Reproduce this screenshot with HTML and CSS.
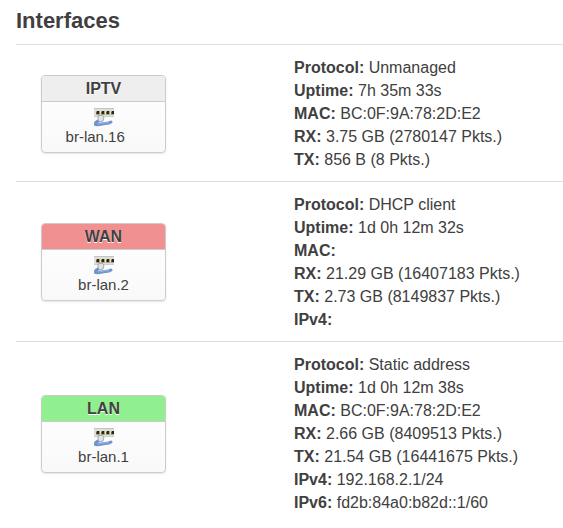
FILE: index.html
```html
<!DOCTYPE html>
<html lang="en">
<head>
    <meta charset="UTF-8">
    <meta name="viewport" content="width=device-width, initial-scale=1.0">
    <title>Interfaces</title>
    <link rel="stylesheet" href="styles.css">
</head>
<body>
    <!-- ethernet switch icon, shared by all the boxes -->
    <svg class="sprite" aria-hidden="true">
        <symbol id="icon-switch" viewBox="0 0 20 20">
            <path d="M0 1h20v9H0z" fill="#dededb"/>
            <path d="M0 1h20v1H0z" fill="#c4c4c2"/>
            <path d="M0 9h20v1H0z" fill="#cfcfcc"/>
            <path d="M2 4h4v4H2zM7 4h4v4H7zM12 4h4v4h-4zM17 4h3v4h-3z" fill="#a8a478"/>
            <path d="M3 4h2v3H3zM8 4h2v3H8zM13 4h2v3h-2zM18 4h2v3h-2z" fill="#2a2716"/>
            <path d="M2 5h1v2H2zM7 5h1v2H7zM12 5h1v2h-1zM17 5h1v2h-1z" fill="#6b6742"/>
            <path d="M5 14c-2 0-4 2-4 3s4 1 7 0 6 0 9-2" fill="none" stroke="#7095cc" stroke-width="3" stroke-linecap="round"/>
            <path d="M4 17c4 0 6-2 11-1" fill="none" stroke="#94b2dd" stroke-width="1"/>
            <path d="M4 9l4-1 2 2-1 4-3 1-2-2z" fill="#dfe2e6" stroke="#a2a8b0" stroke-width="1"/>
        </symbol>
    </svg>

    <main class="interfaces">
        <h2>Interfaces</h2>

        <section class="row">
            <div class="ifacebox">
                <div class="ifacebox-head">IPTV</div>
                <div class="ifacebox-body">
                    <svg class="icon"><use href="#icon-switch"/></svg>
                    <span>br-lan.16&nbsp;&nbsp;&nbsp;&nbsp;</span>
                </div>
            </div>
            <div class="info">
                <div><strong>Protocol:</strong> Unmanaged</div>
                <div><strong>Uptime:</strong> 7h 35m 33s</div>
                <div><strong>MAC:</strong> BC:0F:9A:78:2D:E2</div>
                <div><strong>RX:</strong> 3.75 GB (2780147 Pkts.)</div>
                <div><strong>TX:</strong> 856 B (8 Pkts.)</div>
            </div>
        </section>

        <section class="row">
            <div class="ifacebox">
                <div class="ifacebox-head wan">WAN</div>
                <div class="ifacebox-body">
                    <svg class="icon"><use href="#icon-switch"/></svg>
                    <span>br-lan.2</span>
                </div>
            </div>
            <div class="info">
                <div><strong>Protocol:</strong> DHCP client</div>
                <div><strong>Uptime:</strong> 1d 0h 12m 32s</div>
                <div><strong>MAC:</strong></div>
                <div><strong>RX:</strong> 21.29 GB (16407183 Pkts.)</div>
                <div><strong>TX:</strong> 2.73 GB (8149837 Pkts.)</div>
                <div><strong>IPv4:</strong></div>
            </div>
        </section>

        <section class="row">
            <div class="ifacebox">
                <div class="ifacebox-head lan">LAN</div>
                <div class="ifacebox-body">
                    <svg class="icon"><use href="#icon-switch"/></svg>
                    <span>br-lan.1</span>
                </div>
            </div>
            <div class="info">
                <div><strong>Protocol:</strong> Static address</div>
                <div><strong>Uptime:</strong> 1d 0h 12m 38s</div>
                <div><strong>MAC:</strong> BC:0F:9A:78:2D:E2</div>
                <div><strong>RX:</strong> 2.66 GB (8409513 Pkts.)</div>
                <div><strong>TX:</strong> 21.54 GB (16441675 Pkts.)</div>
                <div><strong>IPv4:</strong> 192.168.2.1/24</div>
                <div><strong>IPv6:</strong> fd2b:84a0:b82d::1/60</div>
            </div>
        </section>
    </main>
</body>
</html>
```
FILE: styles.css
```css
body {
    margin: 0;
    background-color: #fff;
    color: #404040;
    font-family: "Liberation Sans", Arial, sans-serif;
    font-size: 16px;
    line-height: 23px;
}

.sprite {
    display: none;
}

.interfaces {
    padding-left: 16px;
}

h2 {
    margin: 0;
    padding: 4px 0 6px;
    font-size: 22px;
    line-height: 34px;
}

/* One interface per row: box on the left, status on the right */
.row {
    display: grid;
    grid-template-columns: 253px 1fr;
    align-items: center;
    padding: 11px 0 10px 25px;
    border-top: 1px solid #ddd;
}

.ifacebox {
    width: 125px;
    box-sizing: border-box;
    border: 1px solid #ccc;
    border-radius: 4px;
    overflow: hidden;
    background: linear-gradient(#fff, #f9f9f9);
    box-shadow: 0 1px 2px rgba(0, 0, 0, 0.1);
    text-align: center;
}

.ifacebox-head {
    border-bottom: 1px solid #ccc;
    background-color: #eee;
    font-weight: bold;
    line-height: 25px;
    text-shadow: 0 1px 0 #fff;
}

/* Firewall zone colours */
.ifacebox-head.wan {
    background-color: #f09090;
}

.ifacebox-head.lan {
    background-color: #90f090;
}

.ifacebox-body {
    display: flex;
    flex-direction: column;
    align-items: center;
    padding: 5px 0;
    font-size: 15px;
    line-height: 20px;
}

.icon {
    width: 20px;
    height: 20px;
}
```
